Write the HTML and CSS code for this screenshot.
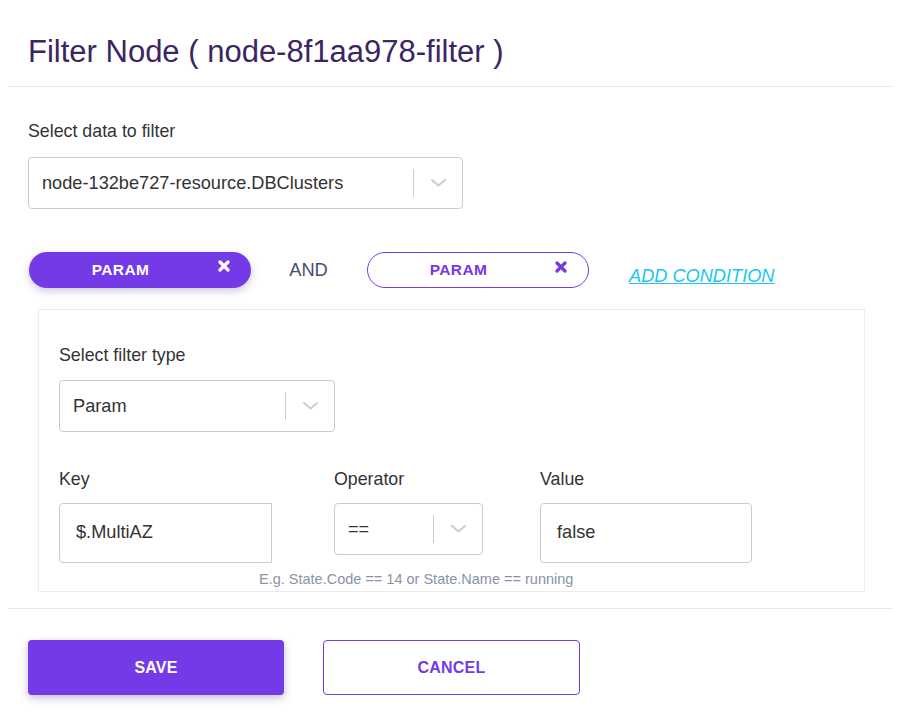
FILE: index.html
```html
<!DOCTYPE html>
<html>
<head>
<meta charset="utf-8">
<link rel="stylesheet" href="styles.css">
</head>
<body>
<div class="modal">
  <div class="header">
    <h1 class="title">Filter Node ( node-8f1aa978-filter )</h1>
  </div>
  <div class="body">
    <div class="label">Select data to filter</div>
    <div class="select select-data">
      <div class="select-value">node-132be727-resource.DBClusters</div>
      <div class="select-sep"></div>
      <div class="select-ind"><svg width="15" height="8" viewBox="0 0 15 8"><polyline points="1,1 7.5,6.5 14,1" fill="none" stroke="#cccccc" stroke-width="2" stroke-linecap="round" stroke-linejoin="round"/></svg></div>
    </div>
    <div class="chips">
      <div class="chip chip-active"><span class="chip-text">PARAM</span><svg class="chip-x" width="12" height="12" viewBox="0 0 12 12"><path d="M2 2 L10 10 M10 2 L2 10" stroke="currentColor" stroke-width="3.2" stroke-linecap="round"/></svg></div>
      <div class="and">AND</div>
      <div class="chip chip-outline"><span class="chip-text">PARAM</span><svg class="chip-x" width="12" height="12" viewBox="0 0 12 12"><path d="M2 2 L10 10 M10 2 L2 10" stroke="currentColor" stroke-width="3.2" stroke-linecap="round"/></svg></div>
      <a class="add" href="#">ADD CONDITION</a>
    </div>
    <div class="panel">
      <div class="label">Select filter type</div>
      <div class="select select-type">
        <div class="select-value">Param</div>
        <div class="select-sep"></div>
        <div class="select-ind"><svg width="15" height="8" viewBox="0 0 15 8"><polyline points="1,1 7.5,6.5 14,1" fill="none" stroke="#cccccc" stroke-width="2" stroke-linecap="round" stroke-linejoin="round"/></svg></div>
      </div>
      <div class="fields">
        <div class="field field-key">
          <div class="label">Key</div>
          <div class="input">$.MultiAZ</div>
        </div>
        <div class="field field-op">
          <div class="label">Operator</div>
          <div class="select select-op">
            <div class="select-value">==</div>
            <div class="select-sep"></div>
            <div class="select-ind"><svg width="15" height="8" viewBox="0 0 15 8"><polyline points="1,1 7.5,6.5 14,1" fill="none" stroke="#cccccc" stroke-width="2" stroke-linecap="round" stroke-linejoin="round"/></svg></div>
          </div>
        </div>
        <div class="field field-val">
          <div class="label">Value</div>
          <div class="input">false</div>
        </div>
      </div>
      <div class="hint">E.g. State.Code == 14 or State.Name == running</div>
    </div>
  </div>
  <div class="footer">
    <button class="btn btn-save">SAVE</button>
    <button class="btn btn-cancel">CANCEL</button>
  </div>
</div>
</body>
</html>
```

FILE: styles.css
```css
* { box-sizing: border-box; }
html, body { margin: 0; padding: 0; background: #ffffff; }
body {
  font-family: "Liberation Sans", Arial, sans-serif;
  color: #333333;
}
.modal { margin: 0 6px 0 8px; }
.header {
  padding: 30px 20px 12px;
  border-bottom: 1px solid #e9e9e9;
}
.title {
  margin: 0;
  font-size: 31px;
  font-weight: 400;
  line-height: 44px;
  color: #3b2562;
}
.body { padding: 34px 20px 16px; }
.label {
  font-size: 17.8px;
  line-height: 20px;
  color: #333333;
}
.select {
  display: flex;
  align-items: center;
  height: 52px;
  border: 1px solid #cccccc;
  border-radius: 4px;
  background: #fff;
}
.select-value {
  flex: 1;
  font-size: 18.2px;
  color: #333333;
  padding-left: 13px;
  white-space: nowrap;
  overflow: hidden;
}
.select-sep {
  width: 1px;
  align-self: stretch;
  margin: 11px 0;
  background: #cccccc;
}
.select-ind {
  width: 48px;
  display: flex;
  justify-content: center;
  align-items: center;
  padding-left: 1px;
}
.select-ind svg { display: block; }
.select-data { width: 435px; margin-top: 16px; }
.chips {
  display: flex;
  align-items: center;
  margin-top: 43px;
  padding-left: 1px;
}
.chip {
  position: relative;
  width: 222px;
  height: 36px;
  border-radius: 18px;
  display: flex;
  align-items: center;
  padding-right: 40px;
}
.chip-text {
  flex: 1;
  text-align: center;
  font-size: 15.5px;
  font-weight: 700;
  letter-spacing: 0.4px;
  padding-left: 1px;
}
.chip-x {
  position: absolute;
  right: 21px;
  top: 8px;
}
.chip-active {
  background: #743ae7;
  color: #ffffff;
  box-shadow: 0 3px 8px rgba(60, 40, 120, 0.25);
}
.chip-outline {
  background: #ffffff;
  color: #743ae7;
  border: 1px solid #743ae7;
}
.and {
  width: 116px;
  text-align: center;
  font-size: 18.3px;
  color: #4a4e6d;
  padding-right: 1px;
}
.add {
  margin-left: 40px;
  margin-top: 13px;
  font-size: 18.2px;
  font-style: italic;
  color: #1ac6f0;
  text-decoration: underline;
}
.panel {
  margin: 21px 8px 0 10px;
  border: 1px solid #ececec;
  padding: 35px 20px 4px;
}
.select-type { width: 276px; margin-top: 15px; }
.fields {
  display: flex;
  margin-top: 37px;
}
.field .label { margin-bottom: 14px; }
.field-key { width: 213px; margin-right: 62px; }
.field-op { width: 149px; margin-right: 57px; }
.field-val { width: 212px; }
.input {
  height: 60px;
  border: 1px solid #cccccc;
  border-radius: 4px;
  font-size: 18.2px;
  line-height: 57px;
  padding-left: 16px;
  color: #333333;
}
.field-key .input { border-top-right-radius: 0; border-bottom-right-radius: 0; }
.select-op .select-value { padding-left: 13px; }
.hint {
  margin-top: 8px;
  padding-left: 200px;
  font-size: 14.5px;
  line-height: 16px;
  color: #8a93a6;
}
.footer {
  border-top: 1px solid #e9e9e9;
  padding: 31px 20px 20px;
  display: flex;
}
.btn {
  width: 256px;
  height: 55px;
  border-radius: 4px;
  font-family: "Liberation Sans", Arial, sans-serif;
  font-size: 16px;
  font-weight: 700;
  letter-spacing: 0.2px;
  cursor: pointer;
}
.btn-save {
  background: #743ae7;
  color: #ffffff;
  border: none;
  box-shadow: 0 3px 8px rgba(60, 40, 120, 0.3);
}
.btn-cancel {
  margin-left: 39px;
  width: 257px;
  background: #ffffff;
  color: #743ae7;
  border: 1px solid #743ae7;
}
```
